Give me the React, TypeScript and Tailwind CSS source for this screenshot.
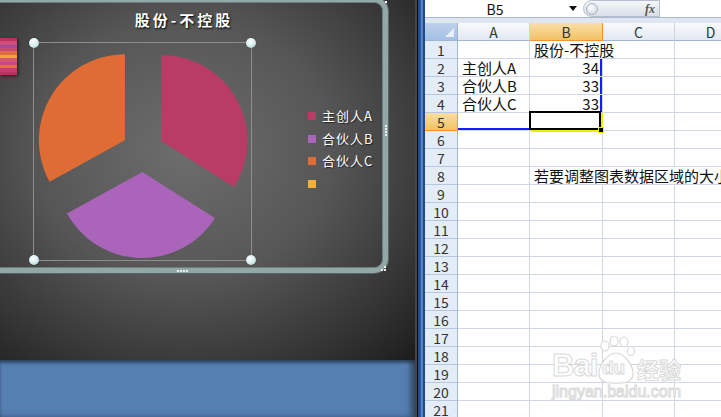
import React from "react";

const CJK = '"Noto Sans CJK SC", "Noto Sans", sans-serif';

function pt(cx: number, cy: number, r: number, deg: number): [number, number] {
  const a = (deg * Math.PI) / 180;
  return [cx + r * Math.sin(a), cy - r * Math.cos(a)];
}

function slice(a0: number, a1: number) {
  const cx = 109, cy = 108, r = 86, d = 21;
  const mid = (a0 + a1) / 2;
  const [ox, oy] = pt(0, 0, d, mid);
  const c: [number, number] = [cx + ox, cy + oy];
  const p0 = pt(c[0], c[1], r, a0);
  const p1 = pt(c[0], c[1], r, a1);
  const large = a1 - a0 > 180 ? 1 : 0;
  return `M${c[0].toFixed(2)} ${c[1].toFixed(2)} L${p0[0].toFixed(2)} ${p0[1].toFixed(2)} A${r} ${r} 0 ${large} 1 ${p1[0].toFixed(2)} ${p1[1].toFixed(2)} Z`;
}

function Handle({ pos }: { pos: string }) {
  return (
    <div
      className={`absolute w-[10px] h-[10px] rounded-full bg-[radial-gradient(circle_at_40%_35%,#ffffff_0%,#d9f1f1_45%,#9cc3c6_100%)] shadow-[0_0_1px_rgba(0,0,0,0.6)] ${pos}`}
    />
  );
}

const stripes = [
  "#b8345f",
  "#cf4f78",
  "#a74aa0",
  "#c44a6e",
  "#e0702f",
  "#f2a532",
  "#d25a63",
  "#c94a72",
  "#e46f35",
  "#c73d66",
  "#b8345f",
];

function Slide() {
  return (
    <div className="h-[360px] relative overflow-hidden bg-[radial-gradient(ellipse_330px_290px_at_185px_150px,#6d6d6d_0%,#565656_45%,#333333_80%,#1d1d1d_100%)]">
      <div className="relative ml-[-20px] mt-[-3px] w-[408px] h-[276px] rounded-[14px] border-[5px] border-[#94a7a7] shadow-[inset_0_0_0_1px_#6c7d7d,0_0_0_1px_#56646a]">
        <div
          className="pt-[9px] h-[27px] leading-[18px] text-center text-white text-[15px] font-bold tracking-[3px] [text-shadow:1px_1px_2px_#000]"
          style={{ fontFamily: CJK }}
        >
          股份-不控股
        </div>
        <div className="flex mt-[13px]">
          <div className="ml-[15px] w-[17px] mt-[-4px] h-[37px] flex flex-col shadow-[1px_1px_3px_rgba(0,0,0,0.6)]">
            {stripes.map((c, i) => (
              <div key={i} className="flex-1" style={{ background: c }} />
            ))}
          </div>
          <div className="ml-[16px] w-[219px] h-[219px] relative border border-[#8e8e8e] shrink-0">
            <svg className="absolute left-0 top-0" width="218" height="218" viewBox="0 0 218 218">
              <path d={slice(0, 122.4)} fill="#b93c66" />
              <path d={slice(122.4, 241.2)} fill="#aa65bb" />
              <path d={slice(241.2, 360)} fill="#df6c34" />
            </svg>
            <Handle pos="left-[-5px] top-[-5px]" />
            <Handle pos="right-[-5px] top-[-5px]" />
            <Handle pos="left-[-5px] bottom-[-5px]" />
            <Handle pos="right-[-5px] bottom-[-5px]" />
          </div>
          <div className="ml-[56px] mt-[63px] flex flex-col">
            {[
              ["#b93c66", "主创人A"],
              ["#aa65bb", "合伙人B"],
              ["#df6c34", "合伙人C"],
              ["#f5b132", ""],
            ].map(([c, t], i) => (
              <div key={i} className="h-[22.5px] flex items-center gap-[6px]">
                <div className="w-[8px] h-[8px] shrink-0" style={{ background: c }} />
                <span
                  className="text-white text-[13px] leading-[16px] tracking-[1px] whitespace-nowrap [text-shadow:1px_1px_1px_rgba(0,0,0,0.6)]"
                  style={{ fontFamily: CJK }}
                >
                  {t}
                </span>
              </div>
            ))}
          </div>
        </div>
        {/* grips */}
        <div className="absolute left-[192px] bottom-[-4px] flex gap-[1px]">
          {[0, 1, 2, 3].map((i) => (
            <div key={i} className="w-[2px] h-[2px] bg-[#e8f0f0]" />
          ))}
        </div>
        <div className="absolute right-[-4px] top-[123px] flex flex-col gap-[1px]">
          {[0, 1, 2, 3].map((i) => (
            <div key={i} className="w-[2px] h-[2px] bg-[#e8f0f0]" />
          ))}
        </div>
        <div className="absolute right-[-4px] top-[-1px] w-[2px] h-[2px] bg-white" />
        <div className="absolute right-[-3px] bottom-[-3px] grid grid-cols-2 gap-[1px]">
          <div className="w-[2px] h-[2px]" />
          <div className="w-[2px] h-[2px] bg-[#e8f0f0]" />
          <div className="w-[2px] h-[2px] bg-[#e8f0f0]" />
          <div className="w-[2px] h-[2px] bg-[#e8f0f0]" />
        </div>
      </div>
    </div>
  );
}

const colW = ["w-[72px]", "w-[73px]", "w-[72px]", "w-[72px]"];

type Cell = { t?: string; right?: boolean; noR?: boolean; blueR?: boolean; blueB?: boolean; sel?: boolean };
const data: Record<number, Record<number, Cell>> = {
  1: { 1: { t: "股份-不控股", noR: true } },
  2: { 0: { t: "主创人A" }, 1: { t: "34", right: true, blueR: true } },
  3: { 0: { t: "合伙人B" }, 1: { t: "33", right: true, blueR: true } },
  4: { 0: { t: "合伙人C" }, 1: { t: "33", right: true, blueR: true } },
  5: { 0: { blueB: true }, 1: { sel: true } },
  8: { 1: { t: "若要调整图表数据区域的大小", noR: true }, 2: { noR: true } },
};

function Excel() {
  const rows = Array.from({ length: 21 }, (_, i) => i + 1);
  return (
    <div className="flex-1 h-full bg-white relative overflow-hidden flex flex-col" style={{ fontFamily: CJK }}>
      {/* formula bar */}
      <div className="h-[18px] flex border-b border-[#a9b8cc] bg-white shrink-0">
        <div className="w-[140px] flex items-center justify-center text-[14px] leading-[16px] text-[#111]">B5</div>
        <div className="w-[15px] flex items-center justify-center">
          <svg width="8" height="5" viewBox="0 0 8 5">
            <path d="M0 0 H8 L4 5 Z" fill="#111" />
          </svg>
        </div>
        <div className="w-[3px]" />
        <div className="w-[77px] h-[17px] rounded-l-full border border-[#b3bfce] bg-[linear-gradient(#f4f6f9,#d9dfe7)] flex items-center pl-[2px] pr-[4px] justify-between">
          <div className="w-[12px] h-[12px] rounded-full bg-[radial-gradient(circle_at_40%_35%,#ffffff,#c9d1dc)] border border-[#a8b4c4]" />
          <span className="italic font-bold text-[12px] text-[#555] leading-[14px]" style={{ fontFamily: '"Liberation Serif", serif' }}>
            fx
          </span>
        </div>
        <div className="flex-1" />
      </div>
      <div className="h-[5px] bg-[#dfe6f0] shrink-0" />
      {/* header row */}
      <div className="h-[18px] flex shrink-0">
        <div className="w-[33px] h-full shrink-0 bg-[linear-gradient(#bcd1ec,#a4c0e6)] border-r border-b border-[#9eb6ce] relative">
          <svg className="absolute right-[3px] bottom-[3px]" width="9" height="9" viewBox="0 0 9 9">
            <path d="M9 0 V9 H0 Z" fill="#e9eff7" />
          </svg>
        </div>
        {["A", "B", "C", "D"].map((c, i) => (
          <div
            key={c}
            className={`${colW[i]} h-full shrink-0 flex items-center justify-center text-[14px] leading-[16px] border-r border-b ${
              i === 1
                ? "bg-[linear-gradient(#fadea6,#f2c263)] border-[#f29436] text-[#333]"
                : "bg-[linear-gradient(#f9fafc,#e2e8f1)] border-r-[#c9d5e4] border-b-[#9eb6ce] text-[#2a3b3b]"
            }`}
          >
            {c}
          </div>
        ))}
      </div>
      {rows.map((r) => (
        <div key={r} className="h-[18px] flex shrink-0">
          <div
            className={`w-[33px] h-full shrink-0 flex items-center justify-center text-[14px] leading-[16px] border-r border-b ${
              r === 5
                ? "bg-[linear-gradient(#fadea6,#f2c263)] border-[#f29436] text-[#333]"
                : "bg-[#e4ecf7] border-r-[#9eb6ce] border-b-[#b5c7dc] text-[#333]"
            }`}
          >
            {r}
          </div>
          {colW.map((w, ci) => {
            const cell = data[r]?.[ci] || {};
            return (
              <div
                key={ci}
                className={`${w} h-full shrink-0 relative border-b border-[#d0d7e5] ${
                  cell.noR ? "" : "border-r"
                } ${cell.blueR ? "shadow-[inset_-2px_0_0_#1a1aff]" : ""} ${
                  cell.blueB ? "shadow-[inset_0_-2px_0_#1a1aff]" : ""
                } flex items-center ${cell.right ? "justify-end pr-[3px]" : "pl-[4px]"}`}
              >
                {cell.t && (
                  <span className="text-[15px] leading-[16px] whitespace-nowrap text-[#111] relative z-10">{cell.t}</span>
                )}
                {cell.sel && (
                  <div className="absolute left-[-1px] top-[-2px] w-[72px] h-[19px] border-2 border-black shadow-[2px_2px_0_0_#eeee00] z-10">
                    <div className="absolute right-[-5px] bottom-[-5px] w-[6px] h-[6px] bg-black border border-[#eeee00]" />
                  </div>
                )}
              </div>
            );
          })}
        </div>
      ))}
      {/* watermark */}
      <div className="absolute left-[127px] top-[336px] w-[135px] h-[64px] pointer-events-none">
        <span
          className="absolute left-0 top-[14px] text-[31px] leading-[32px] font-bold tracking-[-1px] text-white [-webkit-text-stroke:1px_#d9d9d9]"
          style={{ fontFamily: '"Liberation Sans", Arial, sans-serif' }}
        >
          Bai
        </span>
        <svg className="absolute left-[44px] top-0" width="40" height="50" viewBox="0 0 40 50">
          <g fill="#ffffff" stroke="#d9d9d9" strokeWidth="1.2">
            <ellipse cx="9" cy="10" rx="4" ry="5" />
            <ellipse cx="18" cy="5" rx="4" ry="5" />
            <ellipse cx="28" cy="6" rx="4" ry="5" />
            <ellipse cx="35" cy="15" rx="3.5" ry="4.5" />
            <path d="M20 17 C 28 17 36 28 37 36 C 38 45 30 48 20 47 C 10 48 2 45 3 36 C 4 28 12 17 20 17 Z" />
          </g>
        </svg>
        <span
          className="absolute left-[50px] top-[22px] text-[19px] leading-[20px] font-bold text-white [-webkit-text-stroke:1px_#d9d9d9]"
          style={{ fontFamily: '"Liberation Sans", Arial, sans-serif' }}
        >
          du
        </span>
        <span className="absolute left-[85px] top-[20px] text-[22px] leading-[24px] font-bold text-white [-webkit-text-stroke:1px_#d9d9d9]">
          经验
        </span>
        <span
          className="absolute left-0 top-[47px] text-[16px] leading-[17px] text-white [-webkit-text-stroke:1px_#d9d9d9] whitespace-nowrap"
          style={{ fontFamily: '"Liberation Sans", Arial, sans-serif' }}
        >
          jingyan.baidu.com
        </span>
      </div>
    </div>
  );
}

export default function App() {
  return (
    <div className="w-[721px] h-[417px] flex overflow-hidden bg-[#1b1b1b]">
      <div className="w-[415px] h-full flex flex-col shrink-0">
        <Slide />
        <div className="h-[57px] bg-[#557eb1] shadow-[inset_0_3px_3px_rgba(0,0,0,0.35),inset_-5px_0_5px_rgba(0,0,0,0.35)]" />
      </div>
      <div className="w-[10px] h-full shrink-0 bg-[linear-gradient(to_right,#454545_0,#454545_2px,#0f0f0f_2px,#0f0f0f_3px,#1c468a_3px,#2b5fb0_6px,#8fb0dc_7px,#1f4b8c_8px,#1f4b8c_10px)]" />
      <Excel />
    </div>
  );
}
